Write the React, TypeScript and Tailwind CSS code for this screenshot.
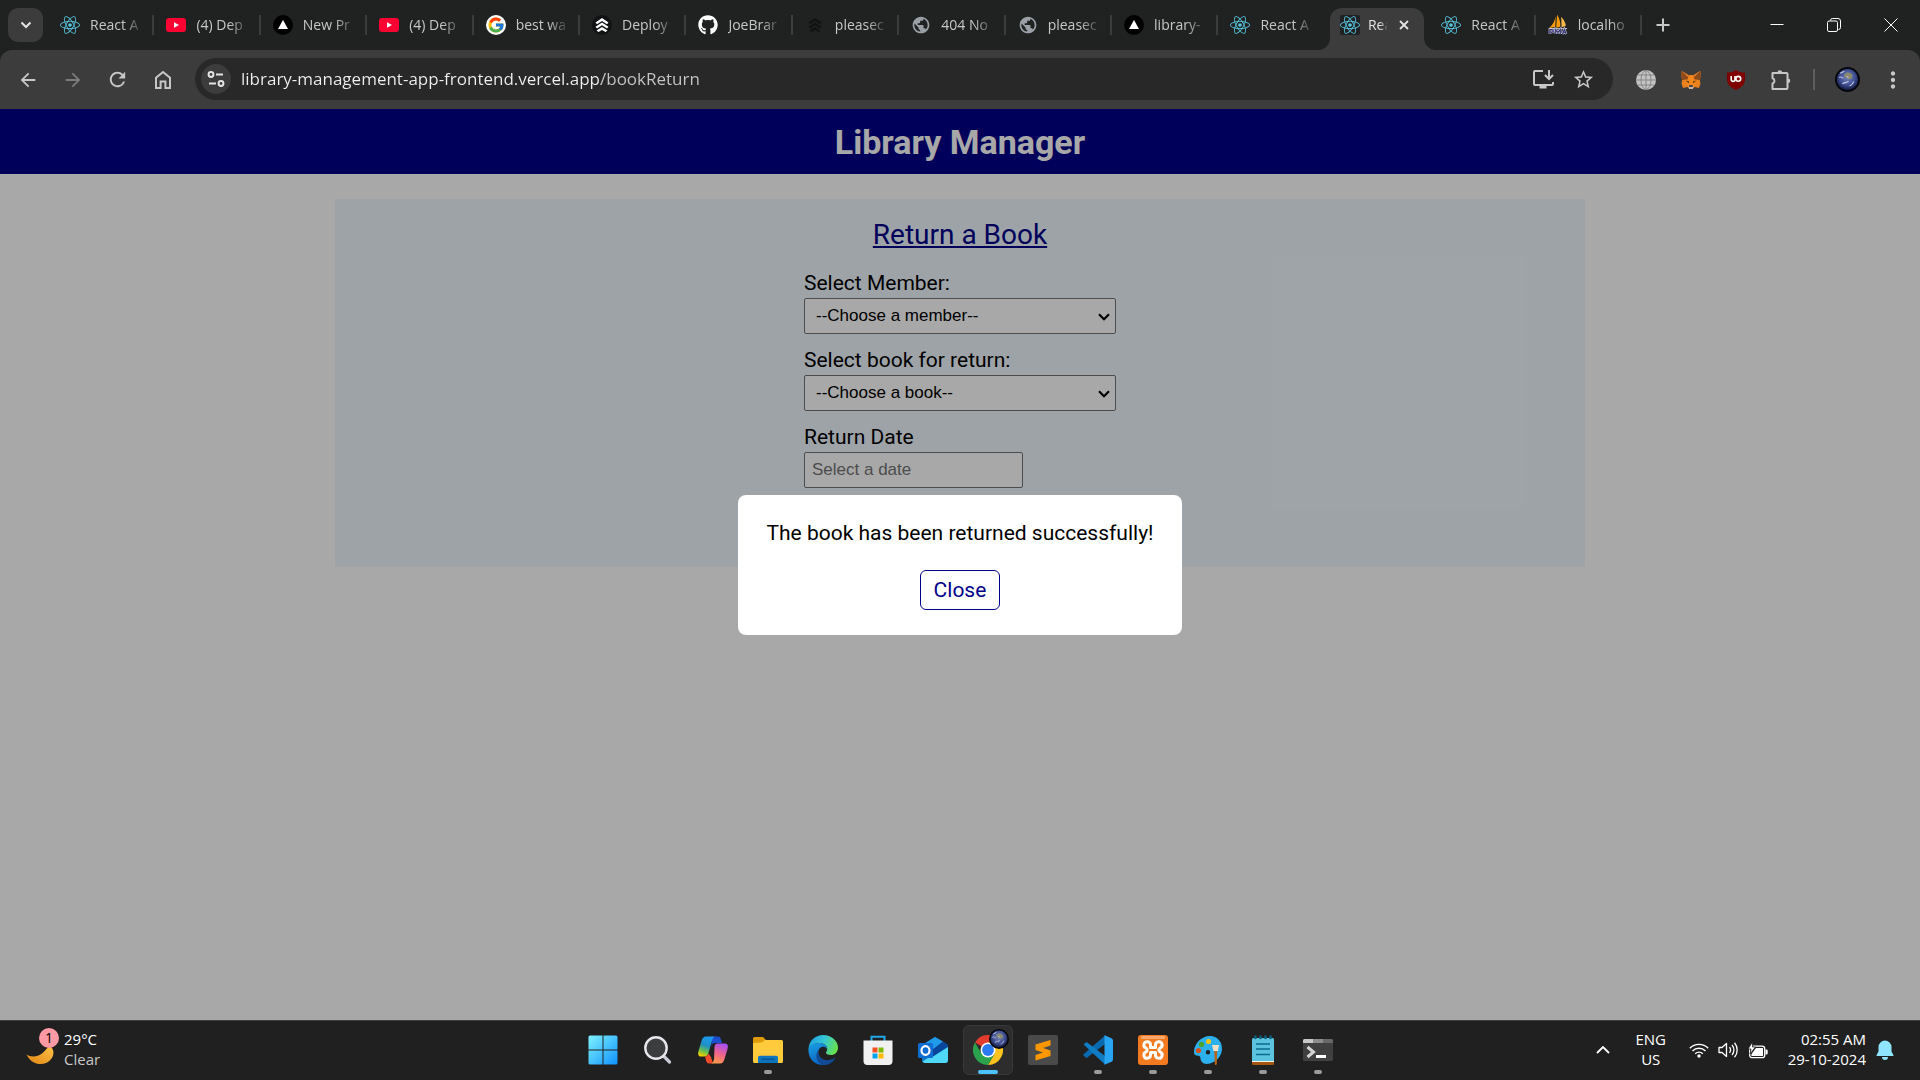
import React, { useId, useState } from "react";
import { FaGithub, FaReact } from "react-icons/fa";
import { FcGoogle } from "react-icons/fc";
import { MdArrowBack, MdArrowForward, MdMoreVert, MdPublic, MdRefresh, MdStarBorder } from "react-icons/md";

/* ---------- favicons ---------- */

const ReactIcon = () => <FaReact className="size-5 text-[#58c4dc]" />;

const YouTubeIcon = () => (
  <svg viewBox="0 0 20 20" className="size-5">
    <rect x="0" y="3" width="20" height="14" rx="3" fill="#ff0033" />
    <path d="M8 7.2v5.6l5-2.8z" fill="#fff" />
  </svg>
);

const VercelIcon = () => (
  <svg viewBox="0 0 20 20" className="size-5">
    <circle cx="10" cy="10" r="10" fill="#000" />
    <path d="M10 5l5 9H5z" fill="#fff" />
  </svg>
);

const GoogleIcon = () => (
  <span className="flex size-5 items-center justify-center rounded-full bg-white">
    <FcGoogle className="size-[18px]" />
  </span>
);

const DeployIcon = ({ dim = false }: { dim?: boolean }) => (
  <svg viewBox="0 0 20 20" className="size-5">
    {!dim && <circle cx="10" cy="10" r="10" fill="#111213" />}
    <path
      d="M10 3l6.500 4.500-1.500 1.800-5-3.300-5 3.300-1.500-1.800zM10 7.500l6.500 4.300-1.500 1.800-5-3.300-5 3.300-1.500-1.800zM10 12l5.500 3.600-2 1.400-3.500-2-3.500 2-2-1.400z"
      fill={dim ? "#111213" : "#fff"}
    />
  </svg>
);

const SailIcon = () => (
  <svg viewBox="0 0 22 24" className="h-6 w-[22px]">
    <path d="M8.500 2C7.500 8 5 12 1 15.500L8 14z" fill="#f89c0e" />
    <path d="M10 .5C12.500 5 14 9 13.500 14L9 15z" fill="#f89c0e" />
    <path d="M14.500 3C18 7 19.500 10 19.500 13L15 14.500z" fill="#f9b64a" />
    <path d="M1 16h20" stroke="#d9d9e8" strokeWidth="1" />
    <path
      d="M2 22v-5h2.500a1.300 1.300 0 0 1 0 2.800H2M8.500 22v-5l2.500 3 2.500-3v5M16 22l2-5 2 5M17 20.500h2.500"
      fill="none"
      stroke="#c9c9e6"
      strokeWidth="2.600"
    />
    <path
      d="M2 22v-5h2.500a1.300 1.300 0 0 1 0 2.800H2M8.500 22v-5l2.500 3 2.500-3v5M16 22l2-5 2 5M17 20.500h2.500"
      fill="none"
      stroke="#35356f"
      strokeWidth="1.300"
    />
  </svg>
);

const Globe = () => <MdPublic className="size-[22px] text-[#9aa0a6]" />;

/* ---------- toolbar icons ---------- */

const HomeIcon = () => (
  <svg viewBox="0 0 20 20" className="size-5" fill="none" stroke="#c7c7c7" strokeWidth="2">
    <path d="M3 7.700L10 2l7 5.700V18h-4.600v-6.500H7.600V18H3z" />
  </svg>
);

const TuneIcon = () => (
  <svg viewBox="0 0 20 20" className="size-5" fill="none" stroke="#e3e3e3" strokeWidth="2">
    <circle cx="5" cy="5.500" r="2.400" />
    <path d="M10 5.500h7M3 14.500h7" />
    <circle cx="15" cy="14.500" r="2.400" />
  </svg>
);

const InstallIcon = () => (
  <svg viewBox="0 0 24 24" className="size-6" fill="none" stroke="#c7c7c7" strokeWidth="2">
    <path d="M12 4H4a1 1 0 0 0-1 1v12a1 1 0 0 0 1 1h17a1 1 0 0 0 1-1v-2" />
    <path d="M18 3v8M14 8l4 4 4-4" />
    <path d="M8.500 20h7" strokeWidth="3" />
  </svg>
);

const PuzzleIcon = () => (
  <svg viewBox="0 0 22 22" className="size-[22px]" fill="none" stroke="#c7c7c7" strokeWidth="2">
    <path d="M2.500 4h14a1 1 0 0 1 1 1v14a1 1 0 0 1-1 1h-14v-5.500a2.700 2.700 0 0 0 0-5.200z" strokeLinejoin="round" />
    <path d="M7.500 3.500a2.300 2.300 0 0 1 4.600 0zM18 9.500a2.300 2.300 0 0 1 0 4.600z" fill="#c7c7c7" stroke="none" />
  </svg>
);

const WireGlobe = () => (
  <svg viewBox="0 0 20 20" className="size-5">
    <circle cx="10" cy="10" r="10" fill="#c4c4c4" />
    <g fill="none" stroke="#858585" strokeWidth="1">
      <ellipse cx="10" cy="10" rx="5" ry="9.500" />
      <path d="M10 0v20M0 10h20M2 5h16M2 15h16" />
    </g>
  </svg>
);

const FoxIcon = () => (
  <svg viewBox="0 0 20 20" className="size-5">
    <path d="M.8 1l7 4.200h4.400l7-4.200L20 5l-1.200 5 .7 3.500-1.500 4.500-4.500-1L11.500 19h-3l-2-2L2 18 .5 13.500l.7-3.500L0 5z" fill="#e8821e" />
    <path d="M.8 1l7 4.200-1 4L1.200 10 0 5zM19.200 1l-7 4.200 1 4 5.600.8L20 5z" fill="#8a4a1c" />
    <path d="M.8 1l7 4.200-1 2zM19.200 1l-7 4.200 1 2z" fill="#d9772a" />
    <path d="M7.800 5.200h4.400l1 4 1.500 5-2.700 2.300H8l-2.700-2.300 1.500-5z" fill="#f6851b" />
    <path d="M4.800 10.500l3.200 1-.2 1.700zM15.200 10.500l-3.200 1 .2 1.700z" fill="#4a2c14" />
    <path d="M7.500 16l1-1h3l1 1-.6 3H8.100z" fill="#c9b8a8" />
    <path d="M8.300 15.300h3.400l.2 1.500H8.100z" fill="#1a1a1a" />
  </svg>
);

const ShieldIcon = () => (
  <svg viewBox="0 0 20 20" className="size-5">
    <path d="M10 0c2 1.700 5.500 2.700 9 2.700V9c0 5.500-4 8.700-9 11-5-2.300-9-5.500-9-11V2.700C4.500 2.700 8 1.700 10 0z" fill="#800000" />
    <path d="M5.200 6v3.500a1.900 1.900 0 0 0 3.800 0V6" fill="none" stroke="#fff" strokeWidth="1.600" />
    <circle cx="12.300" cy="8.800" r="2.400" fill="none" stroke="#fff" strokeWidth="1.600" />
  </svg>
);

function Earth({ className }: { className: string }) {
  const id = useId();
  return (
    <svg viewBox="0 0 24 24" className={className}>
      <defs>
        <radialGradient id={id} cx=".5" cy=".4" r=".6">
          <stop offset="0" stopColor="#7482b4" />
          <stop offset=".6" stopColor="#3f4f94" />
          <stop offset="1" stopColor="#141a3c" />
        </radialGradient>
      </defs>
      <circle cx="12" cy="12" r="12" fill="#05060c" />
      <circle cx="12" cy="12" r="10.200" fill={`url(#${id})`} />
      <path d="M9 7l3-2 3 1 2 2-1 3-3 1-1-2-3 0z" fill="#8b8a6c" />
      <path d="M5 6l4-2M4 10c2-1 3 0 4 1M7 16c2-1 4-1 6-2M14 18c2 0 3-2 4-4M11 9l2 1" stroke="#c3cce2" strokeWidth="1" fill="none" />
    </svg>
  );
}

/* ---------- taskbar icons ---------- */

const StartIcon = () => (
  <svg viewBox="0 0 30 30" className="size-[30px]">
    <defs>
      <linearGradient id="start" x1="0" y1="0" x2="1" y2="1" gradientUnits="objectBoundingBox">
        <stop offset="0" stopColor="#7ff2ff" />
        <stop offset="1" stopColor="#0f92fb" />
      </linearGradient>
    </defs>
    <path d="M2 .5h12.500v14H.5V2A1.500 1.500 0 0 1 2 .5zM15.500.5H28A1.500 1.500 0 0 1 29.500 2v12.500h-14zM.5 15.500h14v14H2A1.500 1.500 0 0 1 .5 28zM15.500 15.500h14V28a1.500 1.500 0 0 1-1.500 1.500H15.500z" fill="url(#start)" />
  </svg>
);

const SearchIcon = () => (
  <svg viewBox="0 0 30 30" className="size-[30px]">
    <path d="M19.500 20l7 7" stroke="#c9ccd4" strokeWidth="3.200" strokeLinecap="round" />
    <circle cx="13" cy="13" r="10.700" fill="#3c3d3f" stroke="#e6e7ea" strokeWidth="2.400" />
  </svg>
);

const CopilotIcon = () => (
  <svg viewBox="0 0 30 30" className="size-[30px]">
    <defs>
      <linearGradient id="cpa" x1=".6" y1="0" x2=".3" y2="1">
        <stop offset="0" stopColor="#1b9cf0" />
        <stop offset=".45" stopColor="#1f8fc4" />
        <stop offset=".75" stopColor="#6cc04a" />
        <stop offset="1" stopColor="#f5d000" />
      </linearGradient>
      <linearGradient id="cpb" x1=".6" y1="0" x2=".3" y2="1">
        <stop offset="0" stopColor="#a74ff0" />
        <stop offset=".5" stopColor="#f0648c" />
        <stop offset="1" stopColor="#ff9a4a" />
      </linearGradient>
    </defs>
    <path d="M14 1.500h6c2 0 2.500 1.500 3 3L24 8h-7c-2 0-3 1-3.500 3z" fill="#1c4fd0" />
    <path d="M8 1.500h8.500c-1.500 1-2 2.500-2.600 4.500L10.500 18c-.7 2.500-2 3.500-4 3.500H3c-2.500 0-3.500-2-2.500-5.500l3-10C4.500 3 5.500 1.500 8 1.500z" fill="url(#cpa)" />
    <path d="M7 21.500c2 0 3-1 3.600-3L13 22l2 6.500h-4c-2 0-2.500-1.500-3-3z" fill="#f04a2a" />
    <path d="M19.500 8.500H27c2.500 0 3.500 2 2.500 5.500l-3 10c-1 3-2 4.500-4.500 4.500h-8.500c1.500-1 2-2.500 2.600-4.500L16.500 12c.6-2.500 1-3.500 3-3.500z" fill="url(#cpb)" />
  </svg>
);

const ExplorerIcon = () => (
  <svg viewBox="0 0 30 30" className="size-[30px]">
    <path d="M0 3.500A1.500 1.500 0 0 1 1.500 2H10l3 3v6H0z" fill="#e09a07" />
    <path d="M0 8l8.500-.5L12 5h16.500A1.500 1.500 0 0 1 30 6.500v20a1.500 1.500 0 0 1-1.500 1.500h-27A1.500 1.500 0 0 1 0 26.500z" fill="#ffcb3c" />
    <path d="M5 28v-5.500A1.800 1.800 0 0 1 6.800 20.700h16.400a1.800 1.800 0 0 1 1.800 1.800V28z" fill="#0c75bd" />
    <path d="M8.500 24.300h13" stroke="#0a4f8e" strokeWidth="1.300" />
  </svg>
);

const EdgeIcon = () => (
  <svg viewBox="0 0 30 30" className="size-[30px]">
    <defs>
      <linearGradient id="ea" x1="0" y1=".2" x2="1" y2=".5">
        <stop offset="0" stopColor="#1b9de2" />
        <stop offset=".5" stopColor="#35c6d6" />
        <stop offset="1" stopColor="#66e04e" />
      </linearGradient>
      <linearGradient id="eb" x1="0" y1="0" x2=".5" y2="1">
        <stop offset="0" stopColor="#1ba0e6" />
        <stop offset="1" stopColor="#0b62bf" />
      </linearGradient>
    </defs>
    <path d="M.5 13C1.500 5 8 0 15 0c8.500 0 15 6 15 12.500 0 5-3.500 7.500-7 7.500-3.500 0-5-1.300-5-2.300 0-.8 1.200-1.400 1.200-3.700 0-3.500-3.500-6-7.700-6C7 8 3 10 .5 13z" fill="url(#ea)" />
    <path d="M.5 13C3 9.500 7 8 11.500 8c4.200 0 7.700 2.500 7.700 6-.5-1.300-2-2.300-4-2.300-3 0-5 2.600-5 5.800 0 6 5 10.500 13 9.300C20.500 29 18 30 15 30 6.500 30-.5 23 .5 13z" fill="url(#eb)" />
    <path d="M10.500 15c-1 7 5 11 10.500 10 3-.5 5-1.500 6.500-2.500-1.500 4-6 7.500-12 7.500C9 29 6 20 10.500 15z" fill="#104a94" />
  </svg>
);

const StoreIcon = () => (
  <svg viewBox="0 0 30 30" className="size-[30px]">
    <path d="M8.500 7V1.800h13V7" fill="none" stroke="#20a8e8" strokeWidth="2" />
    <path d="M.5 5.500h29V26a4 4 0 0 1-4 4h-21a4 4 0 0 1-4-4z" fill="#f1f1f1" />
    <path d="M9.500 12.500h5v5h-5z" fill="#f25022" />
    <path d="M15.500 12.500h5v5h-5z" fill="#7fba00" />
    <path d="M9.500 18.500h5v5h-5z" fill="#00a4ef" />
    <path d="M15.500 18.500h5v5h-5z" fill="#ffb900" />
  </svg>
);

const OutlookIcon = () => (
  <svg viewBox="0 0 30 30" className="size-[30px]">
    <path d="M4 10L17 2l13 8v15a3 3 0 0 1-3 3H7a3 3 0 0 1-3-3z" fill="#1272c4" />
    <path d="M5 9.500L17 2l8 4.500L14 15z" fill="#1f9be8" />
    <path d="M30 10v15a3 3 0 0 1-3 3H7a3 3 0 0 1-2.500-1.500z" fill="#4fd8f8" />
    <path d="M25 6.500l5 3.500v2L15 21.500 14 15z" fill="#06479c" />
    <rect x="0" y="8" width="15" height="15" rx="1.500" fill="#0f6cd0" />
    <ellipse cx="7.500" cy="15.500" rx="4" ry="4.300" fill="none" stroke="#fff" strokeWidth="2.200" />
  </svg>
);

const ChromeIcon = () => (
  <svg viewBox="0 0 30 30" className="size-[30px]">
    <path d="M15 15L2 7.500A15 15 0 0 1 28 7.500H15z" fill="#e33b2e" />
    <path d="M15 7.500h13A15 15 0 0 1 15 30l6.500-11.250z" fill="#fcc31e" />
    <path d="M2 7.500A15 15 0 0 0 15 30l6.500-11.250L8.500 18.750z" fill="#2ba24c" />
    <circle cx="15" cy="15" r="7.500" fill="#fff" />
    <circle cx="15" cy="15" r="5.900" fill="#2a7bef" />
  </svg>
);

const SublimeIcon = () => (
  <svg viewBox="0 0 30 30" className="size-[30px]">
    <rect width="30" height="30" rx="2" fill="#4a4a4a" />
    <path d="M22.500 5v5.500l-7.500 2.500 7.500 2.500V21L7.500 25.500V20l7.500-2.500L7.500 15V9.500z" fill="#ff9800" />
  </svg>
);

const CodeIcon = () => (
  <svg viewBox="0 0 30 30" className="size-[30px]">
    <path d="M.6 20.500l2.200 1.900a1.200 1.200 0 0 0 1.500 0L22 9V.5L.6 19.200a.9.900 0 0 0 0 1.300z" fill="#0a6ab0" />
    <path d="M.6 9.500L22 29.500V21L4.300 7.600a1.200 1.200 0 0 0-1.500 0z" fill="#0f7cc4" />
    <path d="M21.500.3L28.500 3.300A2.500 2.500 0 0 1 30 5.600v18.800a2.500 2.500 0 0 1-1.500 2.300l-7 3z" fill="#27a4f2" />
  </svg>
);

const XamppIcon = () => (
  <svg viewBox="0 0 30 30" className="size-[30px]">
    <rect width="30" height="30" rx="3" fill="#f47a20" />
    <rect x="3" y="1" width="24" height="3" rx="1" fill="#f9a870" />
    <path
      d="M15 12.500h-2.500V10a3.300 3.300 0 1 0-4.500 3.100c1.500 1 1.500 2.800 0 3.800a3.300 3.300 0 1 0 4.500 3.100v-2.500h5V20a3.300 3.300 0 1 0 4.500-3.100c-1.500-1-1.500-2.800 0-3.800a3.300 3.300 0 1 0-4.500-3.100v2.500z"
      fill="none"
      stroke="#fff"
      strokeWidth="3"
      strokeLinejoin="round"
    />
  </svg>
);

const PaintIcon = () => (
  <svg viewBox="0 0 30 30" className="size-[30px]">
    <path d="M17 1C8 1 1 9 1 17c0 4 3 3.500 5 4s1 3 2.500 5.500C10 29 14 29.500 17 28.500c7-2 12-8 12-15S24 1 17 1zM15 15a2.200 2.200 0 1 1 0 4.400 2.200 2.200 0 0 1 0-4.400z" fill="#2cb0ee" fillRule="evenodd" />
    <circle cx="5.500" cy="15.500" r="2.600" fill="#d94f1e" />
    <circle cx="8.500" cy="9.500" r="2.700" fill="#4aa52e" />
    <circle cx="15.500" cy="6.500" r="2.500" fill="#ffc20e" />
    <path d="M19 10h7l-1 6h-4.500z" fill="#efe0c8" />
    <path d="M21.300 16h2.900l-.4 13a1 1 0 0 1-2 0z" fill="#b8651b" />
  </svg>
);

const NotepadIcon = () => (
  <svg viewBox="0 0 30 30" className="size-[30px]">
    <path d="M4 25h22v3.500a1.500 1.500 0 0 1-1.500 1.500h-19A1.500 1.500 0 0 1 4 28.500z" fill="#a4560f" />
    <path d="M4 24h22v3H4z" fill="#f4f4f4" />
    <path d="M4 4.500A1.500 1.500 0 0 1 5.500 3h19A1.500 1.500 0 0 1 26 4.500V26H4z" fill="#5cc3de" />
    <path d="M8 9h14M8 14h14M8 19.500h14" stroke="#0b6c8e" strokeWidth="1.600" />
    <path d="M7.500 1.500v1.500M12.500 1.500v1.500M17.500 1.500v1.500M22.500 1.500v1.500" stroke="#0d5f80" strokeWidth="2.600" strokeLinecap="round" />
  </svg>
);

const TerminalIcon = () => (
  <svg viewBox="0 0 30 30" className="size-[30px]">
    <rect y="4" width="30" height="22" rx="1.500" fill="#404040" />
    <path d="M0 8V5.500A1.500 1.500 0 0 1 1.500 4H10v4z" fill="#c8c8c8" />
    <path d="M10 4h10v4H10z" fill="#8d8d8d" />
    <path d="M20 4h8.500A1.500 1.500 0 0 1 30 5.500V8H20z" fill="#686868" />
    <path d="M4.500 12l6 5-6 5" fill="none" stroke="#d4d4d4" strokeWidth="3" />
    <path d="M13 21.500h10" stroke="#fff" strokeWidth="3" />
  </svg>
);

/* ---------- tab strip ---------- */

type Tab = { icon: React.ReactNode; title: string; active?: boolean; divider?: boolean };

const tabs: Tab[] = [
  { icon: <ReactIcon />, title: "React A", divider: true },
  { icon: <YouTubeIcon />, title: "(4) Dep", divider: true },
  { icon: <VercelIcon />, title: "New Pr", divider: true },
  { icon: <YouTubeIcon />, title: "(4) Dep", divider: true },
  { icon: <GoogleIcon />, title: "best wa", divider: true },
  { icon: <DeployIcon />, title: "Deploy", divider: true },
  { icon: <FaGithub className="size-5 text-white" />, title: "JoeBrar", divider: true },
  { icon: <DeployIcon dim />, title: "pleasec", divider: true },
  { icon: <Globe />, title: "404 No", divider: true },
  { icon: <Globe />, title: "pleasec", divider: true },
  { icon: <VercelIcon />, title: "library-", divider: true },
  { icon: <ReactIcon />, title: "React A" },
  { icon: <ReactIcon />, title: "Rea", active: true },
  { icon: <ReactIcon />, title: "React A", divider: true },
  { icon: <SailIcon />, title: "localho", divider: true },
];

function ActiveTab({ tab }: { tab: Tab }) {
  return (
    <div className="min-w-0 flex-1 px-[5px] pt-2">
      <div role="tab" aria-selected="true" className="relative flex h-[42px] items-center rounded-t-xl bg-[#3c3c3c] pr-3 pb-2 pl-[10px]">
        <svg viewBox="0 0 12 12" className="absolute bottom-0 -left-3 size-3">
          <path d="M12 0v12H0A12 12 0 0 0 12 0z" fill="#3c3c3c" />
        </svg>
        <svg viewBox="0 0 12 12" className="absolute -right-3 bottom-0 size-3">
          <path d="M0 0v12h12A12 12 0 0 1 0 0z" fill="#3c3c3c" />
        </svg>
        <span className="flex size-5 shrink-0 items-center justify-center rounded-xs bg-[#202124]">{tab.icon}</span>
        <span className="ml-2 min-w-0 flex-1 overflow-hidden whitespace-nowrap text-[#e3e3e3] [mask-image:linear-gradient(to_right,black_60%,transparent)]">{tab.title}</span>
        <button aria-label="Close tab" className="ml-2 flex h-5 w-4 shrink-0 items-center justify-center">
          <svg viewBox="0 0 10 10" className="size-[10px]" stroke="#e3e3e3" strokeWidth="1.800">
            <path d="M1 1l8 8M9 1L1 9" />
          </svg>
        </button>
      </div>
    </div>
  );
}

function TabStrip() {
  return (
    <div className="flex h-[50px] text-sm text-[#c7c7c7]">
      <button aria-label="Search tabs" className="mt-2 mr-[5px] ml-2 flex h-[34px] w-[35px] shrink-0 items-center justify-center rounded-[10px] bg-[#3c3c3c]">
        <svg viewBox="0 0 12 12" className="size-3" fill="none" stroke="#e3e3e3" strokeWidth="2">
          <path d="M1.500 3.500L6 8l4.500-4.500" />
        </svg>
      </button>
      <div role="tablist" className="flex max-w-[1594px] min-w-0 flex-1">
        {tabs.map((tab, i) =>
          tab.active ? (
            <ActiveTab key={i} tab={tab} />
          ) : (
            <button key={i} role="tab" aria-selected="false" className="flex h-[50px] min-w-0 flex-1 items-center pl-3 text-left">
              <span className="flex w-5 shrink-0 items-center justify-center">{tab.icon}</span>
              <span className="mr-2 ml-[10px] min-w-0 flex-1 overflow-hidden whitespace-nowrap [mask-image:linear-gradient(to_right,black_60%,transparent)]">{tab.title}</span>
              <span className={tab.divider ? "h-5 w-0.5 shrink-0 bg-[#3c3c3c]" : "w-0.5 shrink-0"} />
            </button>
          ),
        )}
      </div>
      <button aria-label="New tab" className="flex w-[42px] shrink-0 items-center justify-center">
        <svg viewBox="0 0 14 14" className="size-[14px]" stroke="#c7c7c7" strokeWidth="2">
          <path d="M7 .5v13M.5 7h13" />
        </svg>
      </button>
      <div className="ml-auto flex shrink-0 pr-px">
        <button aria-label="Minimize" className="flex w-[57px] items-center justify-center">
          <svg viewBox="0 0 14 14" className="size-[14px]" stroke="#fff">
            <path d="M.5 6.500h13" />
          </svg>
        </button>
        <button aria-label="Restore" className="flex w-[57px] items-center justify-center">
          <svg viewBox="0 0 14 14" className="size-[14px]" fill="none" stroke="#fff">
            <rect x=".5" y="3" width="10" height="10.500" rx="1.500" />
            <path d="M3.500 2.500A2 2 0 0 1 5.300.5H11A2.500 2.500 0 0 1 13.500 3v6.500a2 2 0 0 1-2 2" />
          </svg>
        </button>
        <button aria-label="Close window" className="flex w-[57px] items-center justify-center">
          <svg viewBox="0 0 14 14" className="size-[14px]" stroke="#fff">
            <path d="M.5.5l13 13M13.500.5l-13 13" />
          </svg>
        </button>
      </div>
    </div>
  );
}

/* ---------- address bar ---------- */

function ToolButton({ label, children }: { label: string; children: React.ReactNode }) {
  return (
    <button aria-label={label} className="flex w-[45px] shrink-0 items-center justify-center">
      {children}
    </button>
  );
}

function Toolbar() {
  return (
    <div className="flex h-[59px] rounded-t-xl bg-[#3c3c3c] px-[5px] py-2 text-[#c7c7c7]">
      <ToolButton label="Back"><MdArrowBack className="size-[22px]" /></ToolButton>
      <ToolButton label="Forward"><MdArrowForward className="size-[22px] text-[#7c7c7c]" /></ToolButton>
      <ToolButton label="Reload"><MdRefresh className="size-[23px]" /></ToolButton>
      <ToolButton label="Home"><HomeIcon /></ToolButton>
      <div className="mr-[10px] ml-[10px] flex h-[42px] min-w-0 flex-1 items-center rounded-full bg-[#282828] pr-[10px] pl-[6px]">
        <button aria-label="View site information" className="flex size-[30px] shrink-0 items-center justify-center rounded-full bg-[#3c3c3c]">
          <TuneIcon />
        </button>
        <input
          aria-label="Address and search bar"
          defaultValue="library-management-app-frontend.vercel.app/bookReturn"
          className="ml-[10px] min-w-0 flex-1 bg-[linear-gradient(to_right,#f0f0f0_360px,#c7c7c7_360px)] bg-clip-text text-[17px] text-transparent outline-none"
        />
        <button aria-label="Install app" className="flex w-10 shrink-0 items-center justify-center"><InstallIcon /></button>
        <button aria-label="Bookmark this tab" className="flex w-10 shrink-0 items-center justify-center"><MdStarBorder className="size-[23px]" /></button>
      </div>
      <ToolButton label="Globe extension"><WireGlobe /></ToolButton>
      <ToolButton label="MetaMask"><FoxIcon /></ToolButton>
      <ToolButton label="uBlock Origin"><ShieldIcon /></ToolButton>
      <ToolButton label="Extensions"><PuzzleIcon /></ToolButton>
      <span className="mx-[10px] my-[11px] w-0.5 shrink-0 bg-[#5f5f5f]" />
      <ToolButton label="Profile"><Earth className="size-[25px]" /></ToolButton>
      <ToolButton label="Menu"><MdMoreVert className="size-[26px]" /></ToolButton>
    </div>
  );
}

/* ---------- page ---------- */

function SelectField({ id, label, placeholder }: { id: string; label: string; placeholder: string }) {
  return (
    <div className="mb-[14px]">
      <label htmlFor={id} className="mb-[3px] block">{label}</label>
      <div className="relative">
        <select id={id} className="block h-9 w-full appearance-none rounded-[2px] border border-[#767676] bg-white px-[11px] font-['Liberation_Sans',sans-serif] text-[17px]">
          <option>{placeholder}</option>
        </select>
        <svg viewBox="0 0 12 8" className="pointer-events-none absolute top-[15px] right-[6px] h-2 w-3" fill="none" stroke="#000" strokeWidth="2.200">
          <path d="M1 1.200l5 5 5-5" />
        </svg>
      </div>
    </div>
  );
}

function LibraryPage() {
  const [open, setOpen] = useState(true);
  return (
    <main className="relative flex-1 bg-white font-[Roboto,sans-serif] text-[21px] leading-6 text-black">
      <header className="bg-[#00008b] pt-[13px] pb-[11px] text-center text-white">
        <h1 className="text-[34px] leading-[41px] font-bold">Library Manager</h1>
      </header>
      <section className="mx-auto mt-[25px] w-full max-w-[1250px] bg-[#f0f8ff] pt-5 pb-[79px]">
        <h2 className="text-center text-[28px] leading-8 text-[#00008b] underline">Return a Book</h2>
        <form className="mx-auto mt-5 w-[312px] max-w-full">
          <SelectField id="member" label="Select Member:" placeholder="--Choose a member--" />
          <SelectField id="book" label="Select book for return:" placeholder="--Choose a book--" />
          <label htmlFor="date" className="mb-[3px] block">Return Date</label>
          <input
            id="date"
            placeholder="Select a date"
            className="block h-9 w-[219px] rounded-[2px] border border-[#767676] bg-white px-[7px] font-['Liberation_Sans',sans-serif] text-[17px] placeholder:text-[#757575]"
          />
        </form>
      </section>
      {open && (
        <div className="absolute inset-0 flex items-center justify-center bg-black/34">
          <div role="dialog" aria-modal="true" className="rounded-lg bg-white px-7 pt-[26px] pb-[25px] text-center">
            <p>The book has been returned successfully!</p>
            <button onClick={() => setOpen(false)} className="mt-[25px] h-10 w-20 rounded-md border border-[#00008b] text-[#00008b]">
              Close
            </button>
          </div>
        </div>
      )}
    </main>
  );
}

/* ---------- taskbar ---------- */

const apps: { name: string; icon: React.ReactNode; running?: boolean; current?: boolean }[] = [
  { name: "Start", icon: <StartIcon /> },
  { name: "Search", icon: <SearchIcon /> },
  { name: "Copilot", icon: <CopilotIcon /> },
  { name: "File Explorer", icon: <ExplorerIcon />, running: true },
  { name: "Edge", icon: <EdgeIcon /> },
  { name: "Microsoft Store", icon: <StoreIcon /> },
  { name: "Outlook", icon: <OutlookIcon /> },
  { name: "Chrome", icon: <ChromeIcon />, current: true },
  { name: "Sublime Text", icon: <SublimeIcon /> },
  { name: "Visual Studio Code", icon: <CodeIcon />, running: true },
  { name: "XAMPP", icon: <XamppIcon />, running: true },
  { name: "Paint", icon: <PaintIcon />, running: true },
  { name: "Notepad", icon: <NotepadIcon />, running: true },
  { name: "Terminal", icon: <TerminalIcon />, running: true },
];

function Taskbar() {
  return (
    <footer className="grid h-[60px] grid-cols-[1fr_auto_1fr] items-center border-t border-[#3f3f3f] bg-[#202020] pb-px text-[15px] leading-5 text-white">
      <button className="flex items-center justify-self-start pb-[2px] pl-[26px] text-left">
        <span className="relative block h-10 w-7">
          <svg viewBox="0 0 28 20" className="mt-[17px] h-5 w-7">
            <defs>
              <linearGradient id="moon" x1="0" y1="1" x2="1" y2="0">
                <stop offset="0" stopColor="#e08414" />
                <stop offset="1" stopColor="#ffc247" />
              </linearGradient>
            </defs>
            <path d="M.5 8.500C4 11 11 11.500 16 7.500 20 4.500 22 0 24 0c4 3 4.500 8 1.500 12.500C20 20.500 6 20.500.5 8.500z" fill="url(#moon)" />
          </svg>
          <span className="absolute -top-px left-[13px] flex size-5 items-center justify-center rounded-full bg-[#ff99a4] text-sm text-black">1</span>
        </span>
        <span className="ml-[10px]">
          <span className="block">29°C</span>
          <span className="block text-[#c8c8c8]">Clear</span>
        </span>
      </button>

      <nav className="flex gap-[5px]">
        {apps.map((app) => (
          <button
            key={app.name}
            aria-label={app.name}
            className={
              app.current
                ? "relative flex size-[50px] items-center justify-center rounded-md border border-[#383838] bg-[#2d2d2d]"
                : "relative flex size-[50px] items-center justify-center"
            }
          >
            {app.icon}
            {app.current && <Earth className="absolute top-[3px] right-[3px] size-5" />}
            {app.current && <span className="absolute bottom-0 h-1 w-5 rounded-full bg-[#4cc2ff]" />}
            {app.running && <span className="absolute bottom-px h-1 w-2 rounded-full bg-[#9a9a9a]" />}
          </button>
        ))}
      </nav>

      <div className="flex items-center justify-self-end pr-[26px]">
        <button aria-label="Show hidden icons" className="flex w-10 items-center justify-center">
          <svg viewBox="0 0 14 8" className="h-2 w-[14px]" fill="none" stroke="#fff" strokeWidth="1.800">
            <path d="M1 7l6-6 6 6" />
          </svg>
        </button>
        <button className="w-14 pb-[2px] text-center">
          <span className="block">ENG</span>
          <span className="block">US</span>
        </button>
        <button aria-label="Network, volume and battery" className="ml-[10px] flex items-center gap-[9px]">
          <svg viewBox="0 0 20 16" className="h-4 w-5" fill="none" stroke="#fff" strokeWidth="1.400">
            <path d="M.8 6.200a13 13 0 0 1 18.400 0M3.500 9a9.200 9.200 0 0 1 13 0M6.200 11.700a5.400 5.400 0 0 1 7.600 0" />
            <circle cx="10" cy="14" r="1.700" fill="#fff" stroke="none" />
          </svg>
          <svg viewBox="0 0 21 18" className="h-[18px] w-[21px]" fill="none" stroke="#fff" strokeWidth="1.300">
            <path d="M1 6.500h3L8.500 2.500v13L4 11.500H1z" strokeLinejoin="round" />
            <path d="M11.500 6.200a4.500 4.500 0 0 1 0 5.600M14 4a7.500 7.500 0 0 1 0 10M16.500 1.800a11 11 0 0 1 0 14.400" />
          </svg>
          <svg viewBox="0 0 20 17" className="h-[17px] w-5">
            <rect x="1.700" y="4.200" width="15" height="11.500" rx="2.500" fill="none" stroke="#fff" strokeWidth="1.300" />
            <path d="M8 6h7v8H3.500v-2z" fill="#fff" />
            <path d="M17.500 7.500h1a1.200 1.200 0 0 1 1.200 1.200v2.600a1.200 1.200 0 0 1-1.200 1.200h-1z" fill="#fff" />
            <path d="M4.500 0L0 7h3l-1 5 5.500-7H4.500z" fill="#fff" stroke="#202020" strokeWidth=".8" />
          </svg>
        </button>
        <button className="ml-5 pb-[2px] text-right">
          <span className="block">02:55 AM</span>
          <span className="block">29-10-2024</span>
        </button>
        <button aria-label="Notifications" className="ml-[10px]">
          <svg viewBox="0 0 18 20" className="h-5 w-[18px]" fill="#8fe4ff">
            <path d="M9 .5a6.500 6.500 0 0 1 6.500 6.500v4.500l1.900 3.400a.7.700 0 0 1-.6 1.100H1.200a.7.700 0 0 1-.6-1.100l1.900-3.400V7A6.500 6.500 0 0 1 9 .5z" />
            <path d="M6 17h6a3 3 0 0 1-6 0z" />
          </svg>
        </button>
      </div>
    </footer>
  );
}

export default function App() {
  return (
    <div className="flex min-h-screen flex-col bg-[#202221] font-['Open_Sans',sans-serif]">
      <TabStrip />
      <Toolbar />
      <LibraryPage />
      <Taskbar />
    </div>
  );
}
